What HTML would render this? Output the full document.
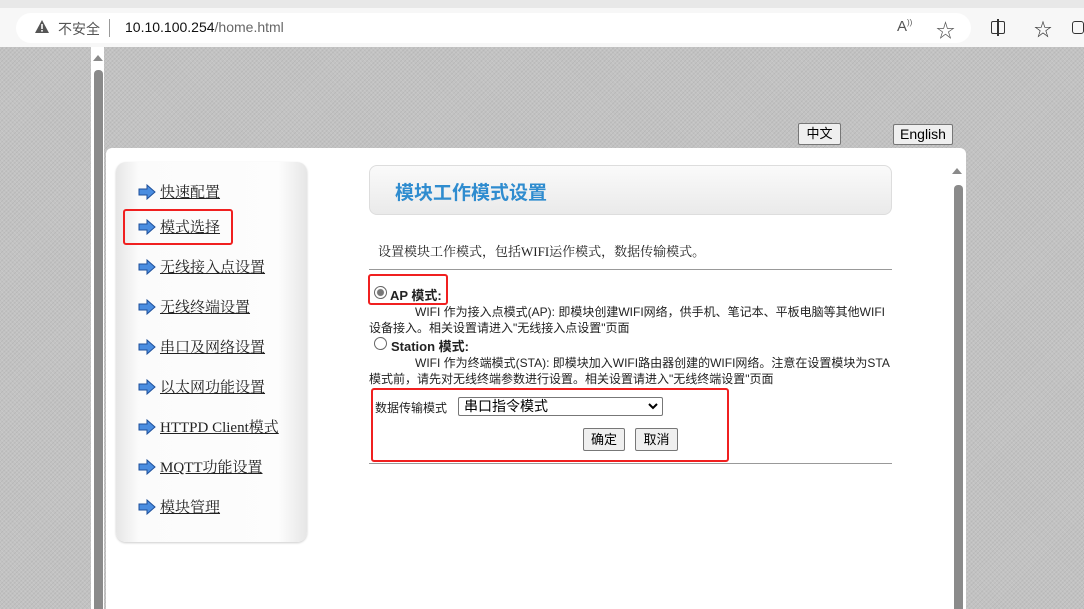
<!DOCTYPE html>
<html><head><meta charset="utf-8"><style>
*{margin:0;padding:0;box-sizing:border-box}
html,body{width:1084px;height:609px;overflow:hidden}
body{background:#c4c4c4;font-family:"Liberation Sans","Noto Sans CJK SC",sans-serif;position:relative}
.abs{position:absolute}
.tabs{left:0;top:0;width:1084px;height:10px;background:#e8e8e8}
.bar{left:0;top:8px;width:1084px;height:39px;background:#f7f7f7}
.url{left:16px;top:13px;width:955px;height:30px;background:#fff;border-radius:15px}
.bg{left:0;top:47px;width:1084px;height:562px;background-color:#c2c2c2;background-image:repeating-linear-gradient(45deg,rgba(255,255,255,.12) 0 1px,transparent 1px 3px),repeating-linear-gradient(-45deg,rgba(0,0,0,.05) 0 1px,transparent 1px 3px)}
.main{left:106px;top:148px;width:860px;height:461px;background:#fff;border-radius:6px 6px 0 0}
.nav{left:116px;top:162px;width:191px;height:380px;border-radius:10px;background:linear-gradient(90deg,#e6e6e6,#fbfbfb 12%,#fdfdfd 85%,#e6e6e6);box-shadow:0 1px 2px #ccc}
.nav a{position:absolute;left:44px;font-family:"Liberation Serif","Noto Serif CJK SC",serif;font-size:15px;color:#222;text-decoration:underline;white-space:nowrap}
.arr{position:absolute;left:22px;width:18px;height:16px}
.hdr{left:369px;top:165px;width:523px;height:50px;border:1px solid #ddd;border-radius:8px;background:linear-gradient(#fafafa,#eaeaea)}
.hdr span{position:absolute;left:25px;top:12px;font-size:19px;font-weight:bold;color:#2f8ccf}
.t{font-size:12px;color:#222;white-space:nowrap}
.hr{height:1px;background:#999}
.red{border:2px solid #f02020;border-radius:3px}
.btn{border:1px solid #777;border-radius:2px;background:#efefef;font-size:13px;text-align:center;color:#000}
.radio{width:13px;height:13px;border-radius:50%;border:1px solid #666;background:#fff}
</style></head><body>
<div class="abs tabs"></div>
<div class="abs bar"></div>
<div class="abs url"></div>
<svg class="abs" style="left:34px;top:19px" width="16" height="16"><path d="M8 1L15 14H1Z" fill="#555"/><rect x="7.2" y="5" width="1.6" height="5" fill="#fff"/><rect x="7.2" y="11" width="1.6" height="1.6" fill="#fff"/></svg>
<div class="abs t" style="left:58px;top:19px;font-size:14px;color:#555">不安全</div>
<div class="abs" style="left:109px;top:19px;width:1px;height:18px;background:#999"></div>
<div class="abs t" style="left:125px;top:19px;font-size:14px;color:#111">10.10.100.254<span style="color:#666">/home.html</span></div>
<div class="abs t" style="left:897px;top:18px;font-size:15px;color:#555">A<sup style="font-size:8px">))</sup></div>
<div class="abs t" style="left:936px;top:16px;font-size:19px;color:#555">☆</div>
<div class="abs" style="left:991px;top:21px;width:14px;height:13px;border:1.5px solid #333;border-radius:2px"></div>
<div class="abs" style="left:997px;top:19px;width:1.5px;height:17px;background:#333"></div>
<div class="abs t" style="left:1034px;top:16px;font-size:18px;color:#333">☆</div>
<div class="abs" style="left:1072px;top:21px;width:12px;height:13px;border:1.5px solid #333;border-radius:3px"></div>
<div class="abs bg"></div>
<div class="abs" style="left:91px;top:47px;width:13px;height:562px;background:#fff"></div>
<div class="abs" style="left:94px;top:70px;width:9px;height:540px;background:#8a8a8a;border-radius:4px 4px 0 0"></div>
<div class="abs" style="left:93px;top:55px;width:0;height:0;border-left:5px solid transparent;border-right:5px solid transparent;border-bottom:6px solid #8a8a8a"></div>
<div class="abs btn" style="left:798px;top:123px;width:43px;height:22px;line-height:20px">中文</div>
<div class="abs btn" style="left:893px;top:124px;width:60px;height:21px;line-height:19px;font-size:14px">English</div>
<div class="abs main"></div>
<div class="abs" style="left:952px;top:168px;width:0;height:0;border-left:5px solid transparent;border-right:5px solid transparent;border-bottom:6px solid #8a8a8a"></div>
<div class="abs" style="left:954px;top:185px;width:9px;height:424px;background:#8a8a8a;border-radius:4px 4px 0 0"></div>
<div class="abs nav">
<svg class="arr" style="top:22px" viewBox="0 0 18 16"><path d="M1 5H9V1L17 8L9 15V11H1Z" fill="#4a8de0" stroke="#1d4f9a"/></svg><a style="top:19px">快速配置</a>
<svg class="arr" style="top:57px" viewBox="0 0 18 16"><path d="M1 5H9V1L17 8L9 15V11H1Z" fill="#4a8de0" stroke="#1d4f9a"/></svg><a style="top:54px">模式选择</a>
<svg class="arr" style="top:97px" viewBox="0 0 18 16"><path d="M1 5H9V1L17 8L9 15V11H1Z" fill="#4a8de0" stroke="#1d4f9a"/></svg><a style="top:94px">无线接入点设置</a>
<svg class="arr" style="top:137px" viewBox="0 0 18 16"><path d="M1 5H9V1L17 8L9 15V11H1Z" fill="#4a8de0" stroke="#1d4f9a"/></svg><a style="top:134px">无线终端设置</a>
<svg class="arr" style="top:177px" viewBox="0 0 18 16"><path d="M1 5H9V1L17 8L9 15V11H1Z" fill="#4a8de0" stroke="#1d4f9a"/></svg><a style="top:174px">串口及网络设置</a>
<svg class="arr" style="top:217px" viewBox="0 0 18 16"><path d="M1 5H9V1L17 8L9 15V11H1Z" fill="#4a8de0" stroke="#1d4f9a"/></svg><a style="top:214px">以太网功能设置</a>
<svg class="arr" style="top:257px" viewBox="0 0 18 16"><path d="M1 5H9V1L17 8L9 15V11H1Z" fill="#4a8de0" stroke="#1d4f9a"/></svg><a style="top:254px">HTTPD Client模式</a>
<svg class="arr" style="top:297px" viewBox="0 0 18 16"><path d="M1 5H9V1L17 8L9 15V11H1Z" fill="#4a8de0" stroke="#1d4f9a"/></svg><a style="top:294px">MQTT功能设置</a>
<svg class="arr" style="top:337px" viewBox="0 0 18 16"><path d="M1 5H9V1L17 8L9 15V11H1Z" fill="#4a8de0" stroke="#1d4f9a"/></svg><a style="top:334px">模块管理</a>
</div>
<div class="abs red" style="left:123px;top:209px;width:110px;height:36px"></div>
<div class="abs hdr"><span>模块工作模式设置</span></div>
<div class="abs t" style="left:378px;top:241px;font-family:'Liberation Serif','Noto Serif CJK SC',serif;font-size:13px">设置模块工作模式，包括WIFI运作模式，数据传输模式。</div>
<div class="abs hr" style="left:369px;top:269px;width:523px"></div>
<div class="abs red" style="left:368px;top:274px;width:80px;height:31px"></div>
<div class="abs radio" style="left:374px;top:286px;background:radial-gradient(#777 40%,#fff 50%)"></div>
<div class="abs t" style="left:390px;top:285px;font-weight:bold;font-size:13px">AP 模式:</div>
<div class="abs t" style="left:415px;top:303px">WIFI 作为接入点模式(AP): 即模块创建WIFI网络，供手机、笔记本、平板电脑等其他WIFI</div>
<div class="abs t" style="left:369px;top:319px">设备接入。相关设置请进入"无线接入点设置"页面</div>
<div class="abs radio" style="left:374px;top:337px"></div>
<div class="abs t" style="left:391px;top:336px;font-weight:bold;font-size:13px">Station 模式:</div>
<div class="abs t" style="left:415px;top:354px">WIFI 作为终端模式(STA): 即模块加入WIFI路由器创建的WIFI网络。注意在设置模块为STA</div>
<div class="abs t" style="left:369px;top:370px">模式前，请先对无线终端参数进行设置。相关设置请进入"无线终端设置"页面</div>
<div class="abs red" style="left:371px;top:388px;width:358px;height:74px"></div>
<div class="abs t" style="left:375px;top:399px">数据传输模式</div>
<div class="abs" style="left:458px;top:397px;width:205px;height:19px;border:1px solid #777;border-radius:2px;background:#fff;font-size:14px;padding-left:5px;line-height:17px">串口指令模式<svg style="position:absolute;right:4px;top:5px" width="10" height="7" viewBox="0 0 10 7"><path d="M1 1L5 5L9 1" fill="none" stroke="#000" stroke-width="2"/></svg></div>
<div class="abs btn" style="left:583px;top:428px;width:42px;height:23px;line-height:21px">确定</div>
<div class="abs btn" style="left:635px;top:428px;width:43px;height:23px;line-height:21px">取消</div>
<div class="abs hr" style="left:369px;top:463px;width:523px"></div>
</body></html>
